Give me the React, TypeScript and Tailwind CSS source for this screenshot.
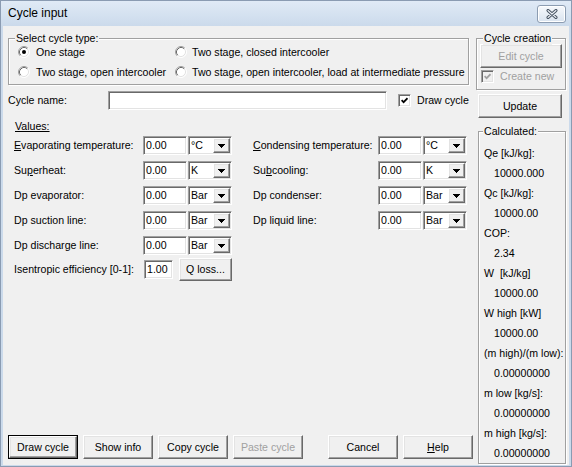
import React from 'react';

const FONT = "font-['Liberation_Sans',Arial,sans-serif]";

// classic 3D edges
const raised =
  'border border-t-white border-l-white border-r-[#696969] border-b-[#696969] shadow-[inset_-1px_-1px_0_#a0a0a0,inset_1px_1px_0_#e3e3e3] bg-[#f0f0f0]';
const sunken =
  'border border-t-[#a0a0a0] border-l-[#a0a0a0] border-r-white border-b-white shadow-[inset_1px_1px_0_#696969,inset_-1px_-1px_0_#e3e3e3]';
const etched = 'border border-[#a0a0a0] shadow-[inset_1px_1px_0_#ffffff,1px_1px_0_#ffffff]';

type Kids = { children?: React.ReactNode };

function Button({
  children,
  className = '',
  disabled = false,
  isDefault = false,
}: Kids & { className?: string; disabled?: boolean; isDefault?: boolean }) {
  return (
    <div className={`${isDefault ? 'border border-black' : ''} ${className}`}>
      <div
        className={`${raised} w-full h-full flex items-center justify-center ${
          disabled ? 'text-[#a0a0a0]' : 'text-black'
        }`}
      >
        {children}
      </div>
    </div>
  );
}

function GroupBox({
  title,
  className = '',
  labelClass = 'left-[6px]',
  children,
}: Kids & { title: string; className?: string; labelClass?: string }) {
  return (
    <div className={`relative ${etched} ${className}`}>
      <span className={`absolute -top-[7px] px-[1px] bg-[#f0f0f0] leading-[13px] whitespace-nowrap ${labelClass}`}>
        {title}
      </span>
      {children}
    </div>
  );
}

function Radio({ checked = false }: { checked?: boolean }) {
  return (
    <svg width="12" height="12" viewBox="0 0 12 12" className="shrink-0">
      <circle cx="6" cy="6" r="5" fill="white" />
      <path d="M2.11 9.89A5.5 5.5 0 0 1 9.89 2.11" fill="none" stroke="#a0a0a0" />
      <path d="M9.89 2.11A5.5 5.5 0 0 1 2.11 9.89" fill="none" stroke="#ffffff" />
      <path d="M2.82 9.18A4.5 4.5 0 0 1 9.18 2.82" fill="none" stroke="#696969" />
      <path d="M9.18 2.82A4.5 4.5 0 0 1 2.82 9.18" fill="none" stroke="#e3e3e3" />
      {checked && <circle cx="6" cy="6" r="2" fill="black" />}
    </svg>
  );
}

function Checkbox({ checked = false, disabled = false }: { checked?: boolean; disabled?: boolean }) {
  return (
    <div
      className={`${sunken} w-[13px] h-[13px] p-px shrink-0 flex items-center justify-center ${
        disabled ? 'bg-[#f0f0f0]' : 'bg-white'
      }`}
    >
      {checked && (
        <svg width="7" height="7" viewBox="0 0 7 7">
          <path d="M0.6 3.2 L2.6 5.2 L6.5 1.2" fill="none" stroke={disabled ? '#a0a0a0' : '#000'} strokeWidth="1.7" />
        </svg>
      )}
    </div>
  );
}

function Arrow() {
  return (
    <svg width="7" height="4" viewBox="0 0 7 4">
      <path d="M0 0h7v1H0zM1 1h5v1H1zM2 2h3v1H2zM3 3h1v1H3z" fill="black" />
    </svg>
  );
}

function Field({ value, className = 'w-[44px]' }: { value: string; className?: string }) {
  return (
    <div className={`${sunken} bg-white h-[19px] p-px pl-[2px] flex items-center shrink-0 ${className}`}>{value}</div>
  );
}

function Combo({ value }: { value: string }) {
  return (
    <div className={`${sunken} bg-white w-[44px] h-[19px] p-px flex items-center shrink-0`}>
      <span className="flex-1 pl-[1px]">{value}</span>
      <div className={`${raised} w-[17px] h-full flex items-center justify-center`}>
        <Arrow />
      </div>
    </div>
  );
}

type Row = { label: React.ReactNode; unit: string };

const leftRows: Row[] = [
  { label: <><span className="underline">E</span>vaporating temperature:</>, unit: '°C' },
  { label: <>Su<span className="underline">p</span>erheat:</>, unit: 'K' },
  { label: 'Dp evaporator:', unit: 'Bar' },
  { label: 'Dp suction line:', unit: 'Bar' },
  { label: 'Dp discharge line:', unit: 'Bar' },
];

const rightRows: Row[] = [
  { label: <><span className="underline">C</span>ondensing temperature:</>, unit: '°C' },
  { label: <>Su<span className="underline">b</span>cooling:</>, unit: 'K' },
  { label: 'Dp condenser:', unit: 'Bar' },
  { label: 'Dp liquid line:', unit: 'Bar' },
];

const calculated: [string, string][] = [
  ['Qe [kJ/kg]:', '10000.000'],
  ['Qc [kJ/kg]:', '10000.00'],
  ['COP:', '2.34'],
  ['W  [kJ/kg]', '10000.00'],
  ['W high [kW]', '10000.00'],
  ['(m high)/(m low):', '0.00000000'],
  ['m low [kg/s]:', '0.00000000'],
  ['m high [kg/s]:', '0.00000000'],
];

function ValueRow({ row, labelW }: { row: Row; labelW: string }) {
  return (
    <div className="flex items-center h-[19px]">
      <span className={`${labelW} shrink-0 whitespace-nowrap`}>{row.label}</span>
      <Field value="0.00" />
      <div className="w-px" />
      <Combo value={row.unit} />
    </div>
  );
}

export default function App() {
  return (
    <div
      className={`${FONT} text-[10.6px] leading-[13px] text-black w-[572px] h-[467px] flex flex-col bg-[#cbdaeb] border border-[#8a9bb2] overflow-hidden`}
    >
      {/* title bar */}
      <div className="h-[25px] shrink-0 flex items-start justify-between pl-[7px] pr-[5px] bg-gradient-to-b from-[#e0eaf6] to-[#cbdaeb]">
        <span className="text-[12px] leading-[25px] pb-[1px]">Cycle input</span>
        <div className="mt-[4px] w-[29px] h-[18px] rounded-[3px] border border-[#8c9cb1] bg-gradient-to-b from-[#f7f9fc] to-[#d9e3ef] shadow-[inset_0_0_0_1px_#ffffff] flex items-center justify-center">
          <svg width="12" height="10" viewBox="0 0 12 10">
            <path d="M2 1.5 L10 8.5 M10 1.5 L2 8.5" stroke="#44505f" strokeWidth="3" strokeLinecap="round" />
            <path d="M2 1.5 L10 8.5 M10 1.5 L2 8.5" stroke="#eef2f8" strokeWidth="1.1" strokeLinecap="round" />
          </svg>
        </div>
      </div>

      {/* client */}
      <div className="flex-1 mx-[2px] mb-[1px] bg-[#f0f0f0] flex pl-[5px] pr-[3px]">
        {/* left column */}
        <div className="w-[465px] flex flex-col">
          <GroupBox title="Select cycle type:" className="mt-[12px] w-[461px] h-[47px] pt-[3px] pl-[9px]">
            <div className="grid grid-cols-[157px_1fr] grid-rows-[20px_20px]">
              <label className="flex items-center gap-[6px]"><Radio checked />One stage</label>
              <label className="flex items-center gap-[5px] whitespace-nowrap"><Radio />Two stage, closed intercooler</label>
              <label className="flex items-center gap-[6px] whitespace-nowrap"><Radio />Two stage, open intercooler</label>
              <label className="flex items-center gap-[5px] whitespace-nowrap"><Radio />Two stage, open intercooler, load at intermediate pressure</label>
            </div>
          </GroupBox>

          <div className="mt-[6px] flex items-center h-[19px]">
            <span className="w-[100px] shrink-0">Cycle name:</span>
            <div className={`${sunken} bg-white w-[279px] h-[19px]`} />
            <div className="ml-[11px] flex items-center gap-[6px]">
              <Checkbox checked />
              <span>Draw cycle</span>
            </div>
          </div>

          <span className="mt-[10px] ml-[7px] h-[13px] underline">Values:</span>

          <div className="mt-[3px] flex pl-[6px]">
            <div className="flex flex-col gap-[6px]">
              {leftRows.map((r, i) => (
                <ValueRow key={i} row={r} labelW="w-[129px]" />
              ))}
              <div className="flex items-center h-[19px] -mt-px">
                <span className="w-[130px] shrink-0 whitespace-nowrap">Isentropic efficiency [0-1]:</span>
                <Field value="1.00" className="w-[29px]" />
                <Button className="ml-[6px] w-[53px] h-[23px]">Q loss...</Button>
              </div>
            </div>
            <div className="ml-[21px] flex flex-col gap-[6px]">
              {rightRows.map((r, i) => (
                <ValueRow key={i} row={r} labelW="w-[125px]" />
              ))}
            </div>
          </div>

          <div className="mt-auto mb-[6px] flex">
            <Button isDefault className="w-[70px] h-[24px]">Draw cycle</Button>
            <Button className="ml-[5px] w-[70px] h-[24px]">Show info</Button>
            <Button className="ml-[5px] w-[70px] h-[24px]">Copy cycle</Button>
            <Button disabled className="ml-[5px] w-[70px] h-[24px]">Paste cycle</Button>
            <Button className="ml-[25px] w-[70px] h-[24px]">Cancel</Button>
            <Button className="ml-[5px] w-[70px] h-[24px]">
              <span><span className="underline">H</span>elp</span>
            </Button>
          </div>
        </div>

        {/* right column */}
        <div className="ml-[3px] w-[90px] flex flex-col">
          <GroupBox title="Cycle creation" className="mt-[12px] w-[90px] h-[52px] pt-[5px] pl-[3px]">
            <Button disabled className="w-[82px] h-[24px]">Edit cycle</Button>
            <div className="mt-[2px] ml-[1px] flex items-center gap-[6px] text-[#a0a0a0]">
              <Checkbox checked disabled />
              <span>Create new</span>
            </div>
          </GroupBox>

          <Button className="mt-[4px] ml-[2px] w-[84px] h-[24px]">Update</Button>

          <GroupBox title="Calculated:" labelClass="left-[4px]" className="mt-[13px] ml-[2px] w-[88px] pt-[11px] pl-[5px]">
            {calculated.map(([k, v]) => (
              <React.Fragment key={k}>
                <div className="h-[20px] flex items-center whitespace-pre">{k}</div>
                <div className="h-[20px] flex items-center pl-[10px]">{v}</div>
              </React.Fragment>
            ))}
          </GroupBox>
        </div>
      </div>
    </div>
  );
}
